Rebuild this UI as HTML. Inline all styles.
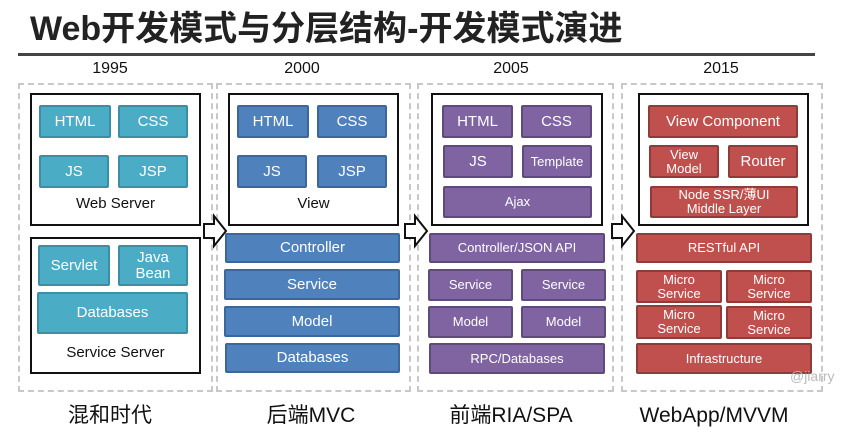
<!DOCTYPE html>
<html><head><meta charset="utf-8"><style>
*{margin:0;padding:0;box-sizing:border-box}
body{width:864px;height:432px;background:#fff;position:relative;overflow:hidden;font-family:"Liberation Sans","Noto Sans CJK SC",sans-serif}
.a{position:absolute}
.t{font-weight:bold;font-size:34px;left:30px;top:1px;color:#222;letter-spacing:0px;white-space:nowrap}
.line{left:18px;top:53px;width:797px;height:3px;background:#444}
.yr{font-size:16px;color:#111;width:120px;text-align:center;top:60px}
.dash{border:2px dashed #c8c8c8;top:83px;height:309px}
.box{border:2px solid #111;background:#fff}
.b{position:absolute;color:#fff;display:flex;align-items:center;justify-content:center;text-align:center;font-size:15px;line-height:1.05;border-radius:2px}
.c1{background:#4bacc6;border:2px solid #3b8ea6}
.c2{background:#4f81bd;border:2px solid #3c679b}
.c3{background:#8064a2;border:2px solid #5e4a7d}
.c4{background:#c0504d;border:2px solid #8f3b39}
.s{font-size:13px}
.lab{font-size:15px;color:#111;text-align:center}
.bl{font-size:21px;color:#111;top:401px;width:200px;text-align:center;line-height:30px}
</style></head><body>
<div class="a t">Web开发模式与分层结构-开发模式演进</div>
<div class="a line"></div>
<div class="a yr" style="left:50px">1995</div>
<div class="a yr" style="left:242px">2000</div>
<div class="a yr" style="left:451px">2005</div>
<div class="a yr" style="left:661px">2015</div>

<div class="a dash" style="left:18px;width:195px"></div>
<div class="a dash" style="left:216px;width:195px"></div>
<div class="a dash" style="left:417px;width:197px"></div>
<div class="a dash" style="left:621px;width:202px"></div>

<!-- col1 -->
<div class="a box" style="left:30px;top:93px;width:171px;height:133px"></div>
<div class="b c1" style="left:39px;top:105px;width:72px;height:33px">HTML</div>
<div class="b c1" style="left:118px;top:105px;width:70px;height:33px">CSS</div>
<div class="b c1" style="left:39px;top:155px;width:70px;height:33px">JS</div>
<div class="b c1" style="left:118px;top:155px;width:70px;height:33px">JSP</div>
<div class="a lab" style="left:30px;top:195px;width:171px">Web Server</div>
<div class="a box" style="left:30px;top:237px;width:171px;height:137px"></div>
<div class="b c1" style="left:38px;top:245px;width:72px;height:41px">Servlet</div>
<div class="b c1" style="left:118px;top:245px;width:70px;height:41px">Java<br>Bean</div>
<div class="b c1" style="left:37px;top:292px;width:151px;height:42px">Databases</div>
<div class="a lab" style="left:30px;top:344px;width:171px">Service Server</div>

<!-- col2 -->
<div class="a box" style="left:228px;top:93px;width:171px;height:133px"></div>
<div class="b c2" style="left:237px;top:105px;width:72px;height:33px">HTML</div>
<div class="b c2" style="left:317px;top:105px;width:70px;height:33px">CSS</div>
<div class="b c2" style="left:237px;top:155px;width:70px;height:33px">JS</div>
<div class="b c2" style="left:317px;top:155px;width:70px;height:33px">JSP</div>
<div class="a lab" style="left:228px;top:195px;width:171px">View</div>
<div class="b c2" style="left:225px;top:233px;width:175px;height:30px">Controller</div>
<div class="b c2" style="left:224px;top:269px;width:176px;height:31px">Service</div>
<div class="b c2" style="left:224px;top:306px;width:176px;height:31px">Model</div>
<div class="b c2" style="left:225px;top:343px;width:175px;height:30px">Databases</div>

<!-- col3 -->
<div class="a box" style="left:431px;top:93px;width:172px;height:133px"></div>
<div class="b c3" style="left:442px;top:105px;width:71px;height:33px">HTML</div>
<div class="b c3" style="left:521px;top:105px;width:71px;height:33px">CSS</div>
<div class="b c3" style="left:443px;top:145px;width:70px;height:33px">JS</div>
<div class="b c3 s" style="left:522px;top:145px;width:70px;height:33px">Template</div>
<div class="b c3 s" style="left:443px;top:186px;width:149px;height:32px">Ajax</div>
<div class="b c3 s" style="left:429px;top:233px;width:176px;height:30px">Controller/JSON API</div>
<div class="b c3 s" style="left:428px;top:269px;width:85px;height:32px">Service</div>
<div class="b c3 s" style="left:521px;top:269px;width:85px;height:32px">Service</div>
<div class="b c3 s" style="left:428px;top:306px;width:85px;height:32px">Model</div>
<div class="b c3 s" style="left:521px;top:306px;width:85px;height:32px">Model</div>
<div class="b c3 s" style="left:429px;top:343px;width:176px;height:31px">RPC/Databases</div>

<!-- col4 -->
<div class="a box" style="left:638px;top:93px;width:171px;height:133px"></div>
<div class="b c4" style="left:648px;top:105px;width:150px;height:33px;font-size:15px">View Component</div>
<div class="b c4 s" style="left:649px;top:145px;width:70px;height:33px">View<br>Model</div>
<div class="b c4" style="left:728px;top:145px;width:70px;height:33px;font-size:15px">Router</div>
<div class="b c4 s" style="left:650px;top:186px;width:148px;height:32px">Node SSR/薄UI<br>Middle Layer</div>
<div class="b c4 s" style="left:636px;top:233px;width:176px;height:30px">RESTful API</div>
<div class="b c4 s" style="left:636px;top:270px;width:86px;height:33px">Micro<br>Service</div>
<div class="b c4 s" style="left:726px;top:270px;width:86px;height:33px">Micro<br>Service</div>
<div class="b c4 s" style="left:636px;top:305px;width:86px;height:34px">Micro<br>Service</div>
<div class="b c4 s" style="left:726px;top:306px;width:86px;height:33px">Micro<br>Service</div>
<div class="b c4 s" style="left:636px;top:343px;width:176px;height:31px">Infrastructure</div>

<!-- arrows -->
<svg class="a" style="left:0;top:0" width="864" height="432">
<g fill="#fff" stroke="#111" stroke-width="2">
<path d="M204 224 H214 V216 L226 231 L214 246 V238 H204 Z"/>
<path d="M405 224 H415 V216 L427 231 L415 246 V238 H405 Z"/>
<path d="M612 224 H622 V216 L634 231 L622 246 V238 H612 Z"/>
</g>
</svg>

<div class="a bl" style="left:10px">混和时代</div>
<div class="a bl" style="left:211px">后端MVC</div>
<div class="a bl" style="left:411px">前端RIA/SPA</div>
<div class="a bl" style="left:614px">WebApp/MVVM</div>
<div class="a" style="left:790px;top:368px;font-size:14px;color:#bbb">@jiarry</div>
</body></html>
